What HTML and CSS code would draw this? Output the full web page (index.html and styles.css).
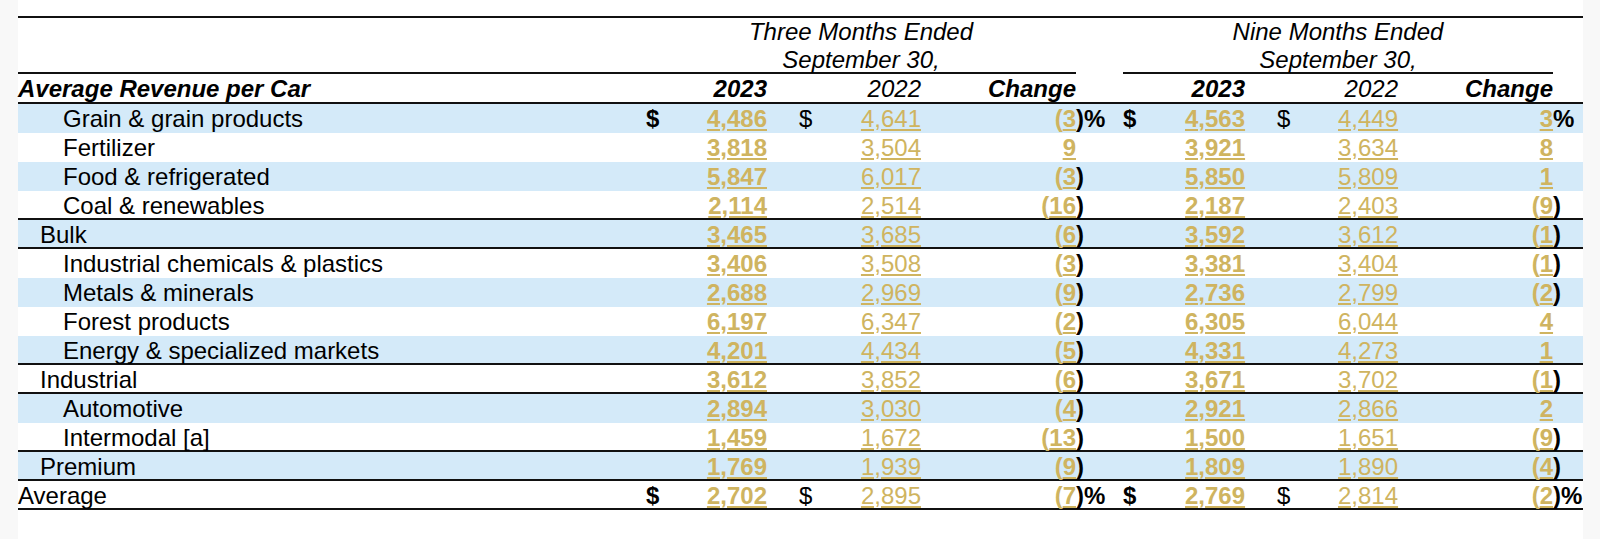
FILE: index.html
```html
<!DOCTYPE html>
<html lang="en">
<head>
<meta charset="utf-8">
<title>Average Revenue per Car</title>
<link rel="stylesheet" href="styles.css">
</head>
<body>
<div class="page">
<table class="rev">
<colgroup>
<col class="c-lbl"><col class="c-d1"><col class="c-v23"><col class="c-d2"><col class="c-v22"><col class="c-ch"><col class="c-sx">
<col class="c-d1b"><col class="c-v23b"><col class="c-d2b"><col class="c-v22b"><col class="c-chb"><col class="c-sxb">
</colgroup>
<tbody>
<tr class="grp">
<td class="top under"></td>
<td class="top under ctr" colspan="5">Three Months Ended<br>September 30,</td>
<td class="top"></td>
<td class="top under ctr" colspan="5">Nine Months Ended<br>September 30,</td>
<td class="top"></td>
</tr>
<tr class="hdr">
<td class="bi">Average Revenue per Car</td>
<td></td>
<td class="r bi">2023</td>
<td></td>
<td class="r it">2022</td>
<td class="r bi">Change</td>
<td></td>
<td></td>
<td class="r bi">2023</td>
<td></td>
<td class="r it">2022</td>
<td class="r bi">Change</td>
<td></td>
</tr>

<tr class="alt">
<td class="l2">Grain &amp; grain products</td>
<td class="bd">$</td><td class="r bd"><u class="g">4,486</u></td><td class="usd">$</td><td class="r"><u class="g">4,641</u></td><td class="r bd"><span class="g">(<u>3</u></span></td><td class="bd">)%</td>
<td class="bd">$</td><td class="r bd"><u class="g">4,563</u></td><td class="usd">$</td><td class="r"><u class="g">4,449</u></td><td class="r bd"><u class="g">3</u></td><td class="bd">%</td>
</tr>
<tr>
<td class="l2">Fertilizer</td>
<td></td><td class="r bd"><u class="g">3,818</u></td><td></td><td class="r"><u class="g">3,504</u></td><td class="r bd"><u class="g">9</u></td><td></td>
<td></td><td class="r bd"><u class="g">3,921</u></td><td></td><td class="r"><u class="g">3,634</u></td><td class="r bd"><u class="g">8</u></td><td></td>
</tr>
<tr class="alt">
<td class="l2">Food &amp; refrigerated</td>
<td></td><td class="r bd"><u class="g">5,847</u></td><td></td><td class="r"><u class="g">6,017</u></td><td class="r bd"><span class="g">(<u>3</u></span></td><td class="bd">)</td>
<td></td><td class="r bd"><u class="g">5,850</u></td><td></td><td class="r"><u class="g">5,809</u></td><td class="r bd"><u class="g">1</u></td><td></td>
</tr>
<tr class="ln">
<td class="l2">Coal &amp; renewables</td>
<td></td><td class="r bd"><u class="g">2,114</u></td><td></td><td class="r"><u class="g">2,514</u></td><td class="r bd"><span class="g">(<u>16</u></span></td><td class="bd">)</td>
<td></td><td class="r bd"><u class="g">2,187</u></td><td></td><td class="r"><u class="g">2,403</u></td><td class="r bd"><span class="g">(<u>9</u></span></td><td class="bd">)</td>
</tr>
<tr class="alt ln">
<td class="l1">Bulk</td>
<td></td><td class="r bd"><u class="g">3,465</u></td><td></td><td class="r"><u class="g">3,685</u></td><td class="r bd"><span class="g">(<u>6</u></span></td><td class="bd">)</td>
<td></td><td class="r bd"><u class="g">3,592</u></td><td></td><td class="r"><u class="g">3,612</u></td><td class="r bd"><span class="g">(<u>1</u></span></td><td class="bd">)</td>
</tr>
<tr>
<td class="l2">Industrial chemicals &amp; plastics</td>
<td></td><td class="r bd"><u class="g">3,406</u></td><td></td><td class="r"><u class="g">3,508</u></td><td class="r bd"><span class="g">(<u>3</u></span></td><td class="bd">)</td>
<td></td><td class="r bd"><u class="g">3,381</u></td><td></td><td class="r"><u class="g">3,404</u></td><td class="r bd"><span class="g">(<u>1</u></span></td><td class="bd">)</td>
</tr>
<tr class="alt">
<td class="l2">Metals &amp; minerals</td>
<td></td><td class="r bd"><u class="g">2,688</u></td><td></td><td class="r"><u class="g">2,969</u></td><td class="r bd"><span class="g">(<u>9</u></span></td><td class="bd">)</td>
<td></td><td class="r bd"><u class="g">2,736</u></td><td></td><td class="r"><u class="g">2,799</u></td><td class="r bd"><span class="g">(<u>2</u></span></td><td class="bd">)</td>
</tr>
<tr>
<td class="l2">Forest products</td>
<td></td><td class="r bd"><u class="g">6,197</u></td><td></td><td class="r"><u class="g">6,347</u></td><td class="r bd"><span class="g">(<u>2</u></span></td><td class="bd">)</td>
<td></td><td class="r bd"><u class="g">6,305</u></td><td></td><td class="r"><u class="g">6,044</u></td><td class="r bd"><u class="g">4</u></td><td></td>
</tr>
<tr class="alt ln">
<td class="l2">Energy &amp; specialized markets</td>
<td></td><td class="r bd"><u class="g">4,201</u></td><td></td><td class="r"><u class="g">4,434</u></td><td class="r bd"><span class="g">(<u>5</u></span></td><td class="bd">)</td>
<td></td><td class="r bd"><u class="g">4,331</u></td><td></td><td class="r"><u class="g">4,273</u></td><td class="r bd"><u class="g">1</u></td><td></td>
</tr>
<tr class="ln">
<td class="l1">Industrial</td>
<td></td><td class="r bd"><u class="g">3,612</u></td><td></td><td class="r"><u class="g">3,852</u></td><td class="r bd"><span class="g">(<u>6</u></span></td><td class="bd">)</td>
<td></td><td class="r bd"><u class="g">3,671</u></td><td></td><td class="r"><u class="g">3,702</u></td><td class="r bd"><span class="g">(<u>1</u></span></td><td class="bd">)</td>
</tr>
<tr class="alt">
<td class="l2">Automotive</td>
<td></td><td class="r bd"><u class="g">2,894</u></td><td></td><td class="r"><u class="g">3,030</u></td><td class="r bd"><span class="g">(<u>4</u></span></td><td class="bd">)</td>
<td></td><td class="r bd"><u class="g">2,921</u></td><td></td><td class="r"><u class="g">2,866</u></td><td class="r bd"><u class="g">2</u></td><td></td>
</tr>
<tr class="ln">
<td class="l2">Intermodal [a]</td>
<td></td><td class="r bd"><u class="g">1,459</u></td><td></td><td class="r"><u class="g">1,672</u></td><td class="r bd"><span class="g">(<u>13</u></span></td><td class="bd">)</td>
<td></td><td class="r bd"><u class="g">1,500</u></td><td></td><td class="r"><u class="g">1,651</u></td><td class="r bd"><span class="g">(<u>9</u></span></td><td class="bd">)</td>
</tr>
<tr class="alt ln">
<td class="l1">Premium</td>
<td></td><td class="r bd"><u class="g">1,769</u></td><td></td><td class="r"><u class="g">1,939</u></td><td class="r bd"><span class="g">(<u>9</u></span></td><td class="bd">)</td>
<td></td><td class="r bd"><u class="g">1,809</u></td><td></td><td class="r"><u class="g">1,890</u></td><td class="r bd"><span class="g">(<u>4</u></span></td><td class="bd">)</td>
</tr>
<tr class="ln">
<td class="l0">Average</td>
<td class="bd">$</td><td class="r bd"><u class="g">2,702</u></td><td class="usd">$</td><td class="r"><u class="g">2,895</u></td><td class="r bd"><span class="g">(<u>7</u></span></td><td class="bd">)%</td>
<td class="bd">$</td><td class="r bd"><u class="g">2,769</u></td><td class="usd">$</td><td class="r"><u class="g">2,814</u></td><td class="r bd"><span class="g">(<u>2</u></span></td><td class="bd">)%</td>
</tr>
</tbody>
</table>
</div>
</body>
</html>
```

FILE: styles.css
```css
html, body {
  margin: 0;
  padding: 0;
}
body {
  background: #f8f8f8;
  font-family: "Liberation Sans", Arial, sans-serif;
  font-size: 24px;
  color: #000;
}
.page {
  margin-left: 18px;
  width: 1565px;
  min-height: 539px;
  box-sizing: border-box;
  padding-top: 16px;
  background: #fff;
}
.rev {
  width: 1565px;
  table-layout: fixed;
  border-collapse: separate;
  border-spacing: 0;
}
.c-lbl { width: 628px; }
.c-d1 { width: 54px; }
.c-v23 { width: 67px; }
.c-d2 { width: 63px; }
.c-v22 { width: 91px; }
.c-ch { width: 155px; }
.c-sx { width: 47px; }
.c-d1b { width: 62px; }
.c-v23b { width: 60px; }
.c-d2b { width: 93px; }
.c-v22b { width: 60px; }
.c-chb { width: 155px; }
.c-sxb { width: 30px; }

.rev td {
  padding: 0;
  white-space: nowrap;
  line-height: 29px;
  vertical-align: top;
  text-align: left;
}
.rev .r { text-align: right; }
.rev .ctr { text-align: center; }

.grp td {
  line-height: 28px;
  padding-top: 2px;
  font-style: italic;
}
.grp td.top { box-shadow: inset 0 2px 0 #111; }
.grp td.top.under { box-shadow: inset 0 2px 0 #111, inset 0 -2px 0 #111; }

.hdr td {
  line-height: 30px;
  box-shadow: inset 0 -2px 0 #111;
}
.bi { font-weight: bold; font-style: italic; }
.it { font-style: italic; }
.bd { font-weight: bold; }
.usd { padding-left: 32px !important; }

.alt td { background: #d4eaf9; }
.ln td { box-shadow: inset 0 -2px 0 #111; }

.l0 { padding-left: 0; }
.rev td.l1 { padding-left: 22px; }
.rev td.l2 { padding-left: 45px; }

.g { color: #cfb460; }
u { text-decoration: underline; }
```
